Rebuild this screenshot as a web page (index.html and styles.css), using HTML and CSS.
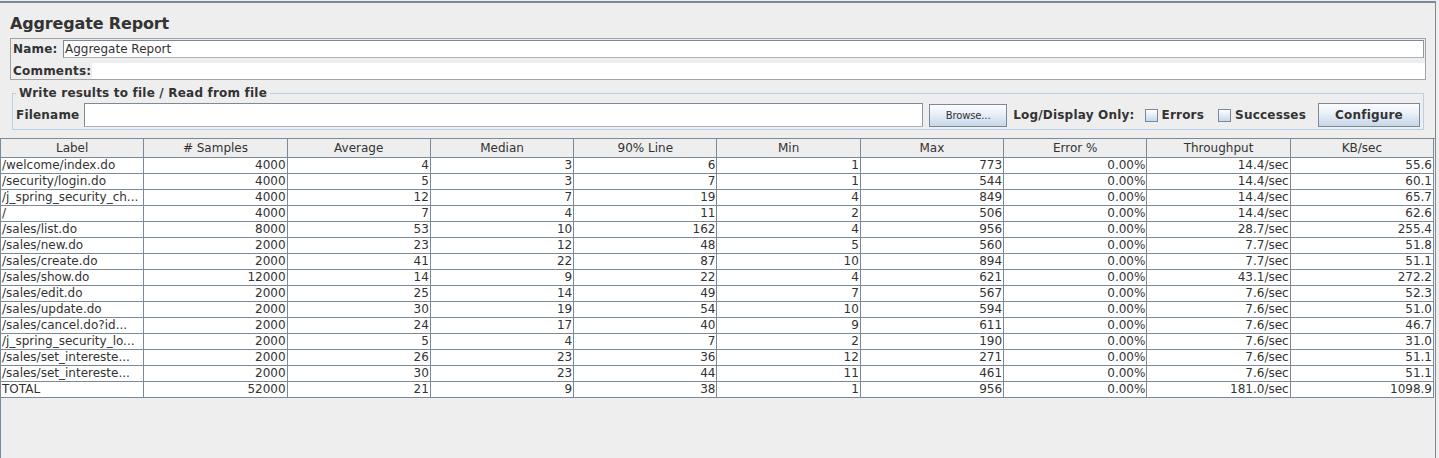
FILE: index.html
```html
<!DOCTYPE html>
<html>
<head>
<meta charset="utf-8">
<title>Aggregate Report</title>
<link rel="stylesheet" href="styles.css">
</head>
<body>
<div class="frame">
  <div class="title">Aggregate Report</div>
  <div class="namebox">
    <div class="nrow">
      <span class="lbl lbl-name">Name:</span>
      <div class="tfield name-field">Aggregate Report</div>
    </div>
    <div class="crow">
      <span class="lbl lbl-comments">Comments:</span>
      <div class="comments"></div>
    </div>
  </div>
  <fieldset class="filebox">
    <legend class="legend">Write results to file / Read from file</legend>
    <div class="frow">
      <span class="lbl lbl-file">Filename</span>
      <div class="tfield file-field"></div>
      <div class="btn btn-browse">Browse...</div>
      <span class="lbl lbl-log">Log/Display Only:</span>
      <span class="check check-err"></span><span class="lbl lbl-err">Errors</span>
      <span class="check check-succ"></span><span class="lbl lbl-succ">Successes</span>
      <div class="btn btn-config">Configure</div>
    </div>
  </fieldset>
  <div class="pane">
    <table class="grid">
      <thead>
        <tr><th>Label</th><th># Samples</th><th>Average</th><th>Median</th><th>90% Line</th><th>Min</th><th>Max</th><th>Error %</th><th>Throughput</th><th>KB/sec</th></tr>
      </thead>
      <tbody>
        <tr><td>/welcome/index.do</td><td>4000</td><td>4</td><td>3</td><td>6</td><td>1</td><td>773</td><td>0.00%</td><td>14.4/sec</td><td>55.6</td></tr>
        <tr><td>/security/login.do</td><td>4000</td><td>5</td><td>3</td><td>7</td><td>1</td><td>544</td><td>0.00%</td><td>14.4/sec</td><td>60.1</td></tr>
        <tr><td>/j_spring_security_ch...</td><td>4000</td><td>12</td><td>7</td><td>19</td><td>4</td><td>849</td><td>0.00%</td><td>14.4/sec</td><td>65.7</td></tr>
        <tr><td>/</td><td>4000</td><td>7</td><td>4</td><td>11</td><td>2</td><td>506</td><td>0.00%</td><td>14.4/sec</td><td>62.6</td></tr>
        <tr><td>/sales/list.do</td><td>8000</td><td>53</td><td>10</td><td>162</td><td>4</td><td>956</td><td>0.00%</td><td>28.7/sec</td><td>255.4</td></tr>
        <tr><td>/sales/new.do</td><td>2000</td><td>23</td><td>12</td><td>48</td><td>5</td><td>560</td><td>0.00%</td><td>7.7/sec</td><td>51.8</td></tr>
        <tr><td>/sales/create.do</td><td>2000</td><td>41</td><td>22</td><td>87</td><td>10</td><td>894</td><td>0.00%</td><td>7.7/sec</td><td>51.1</td></tr>
        <tr><td>/sales/show.do</td><td>12000</td><td>14</td><td>9</td><td>22</td><td>4</td><td>621</td><td>0.00%</td><td>43.1/sec</td><td>272.2</td></tr>
        <tr><td>/sales/edit.do</td><td>2000</td><td>25</td><td>14</td><td>49</td><td>7</td><td>567</td><td>0.00%</td><td>7.6/sec</td><td>52.3</td></tr>
        <tr><td>/sales/update.do</td><td>2000</td><td>30</td><td>19</td><td>54</td><td>10</td><td>594</td><td>0.00%</td><td>7.6/sec</td><td>51.0</td></tr>
        <tr><td>/sales/cancel.do?id...</td><td>2000</td><td>24</td><td>17</td><td>40</td><td>9</td><td>611</td><td>0.00%</td><td>7.6/sec</td><td>46.7</td></tr>
        <tr><td>/j_spring_security_lo...</td><td>2000</td><td>5</td><td>4</td><td>7</td><td>2</td><td>190</td><td>0.00%</td><td>7.6/sec</td><td>31.0</td></tr>
        <tr><td>/sales/set_intereste...</td><td>2000</td><td>26</td><td>23</td><td>36</td><td>12</td><td>271</td><td>0.00%</td><td>7.6/sec</td><td>51.1</td></tr>
        <tr><td>/sales/set_intereste...</td><td>2000</td><td>30</td><td>23</td><td>44</td><td>11</td><td>461</td><td>0.00%</td><td>7.6/sec</td><td>51.1</td></tr>
        <tr><td>TOTAL</td><td>52000</td><td>21</td><td>9</td><td>38</td><td>1</td><td>956</td><td>0.00%</td><td>181.0/sec</td><td>1098.9</td></tr>
      </tbody>
    </table>
  </div>
</div>
</body>
</html>
```

FILE: styles.css
```css
* { box-sizing: border-box; }

html, body {
  margin: 0;
  background: #eeeeee;
}

body {
  padding-top: 1px;
  width: 1439px;
  height: 458px;
  overflow: hidden;
  font-family: "DejaVu Sans", "Liberation Sans", sans-serif;
  font-size: 12px;
  color: #333333;
}

.frame {
  width: 1436px;
  height: 457px;
  border-top: 2px solid #7a8a99;
  border-right: 1px solid #7a8a99;
  display: flex;
  flex-direction: column;
  overflow: hidden;
}

.title {
  padding: 11px 0 4px 10px;
  font-size: 16px;
  font-weight: bold;
  line-height: 20px;
  letter-spacing: -0.15px;
  color: #333333;
}

.lbl {
  font-weight: bold;
  letter-spacing: 0.2px;
  white-space: nowrap;
  color: #333333;
}

/* Name / Comments */
.namebox {
  margin-left: 10px;
  width: 1416px;
  height: 42px;
  border: 1px solid #a3a3a3;
  padding: 1px 0 0 1px;
  display: flex;
  flex-direction: column;
  gap: 5px;
}

.nrow {
  display: flex;
  align-items: center;
  height: 18px;
}

.crow {
  display: flex;
  align-items: center;
  height: 16px;
}

.lbl-name {
  width: 51px;
  padding-left: 1px;
}

.lbl-comments {
  width: 80px;
  padding-left: 1px;
}

.tfield {
  background: #ffffff;
  border: 1px solid #7a8a99;
  border-right-color: #8e9aa6;
  border-bottom-color: #a9b3bd;
}

.name-field {
  flex: 1;
  height: 18px;
  margin-right: 1px;
  padding-left: 1px;
  line-height: 16px;
  color: #333333;
}

.comments {
  flex: 1;
  height: 16px;
  background: #ffffff;
}

/* Write results fieldset */
.filebox {
  margin: 6px 0 0 12px;
  width: 1412px;
  border: 1px solid #b8cfe5;
  padding: 2px 3px 2px 2px;
  min-width: 0;
}

.legend {
  margin-left: 1px;
  padding: 0 3px;
  font-weight: bold;
  letter-spacing: 0.2px;
  line-height: 15px;
  color: #333333;
}

.frow {
  display: flex;
  align-items: center;
  height: 24px;
}

.lbl-file {
  width: 69px;
  padding-left: 1px;
}

.file-field {
  flex: 1;
  height: 24px;
  margin-right: 6px;
}

.btn {
  border: 1px solid #7a8a99;
  background: linear-gradient(to bottom, #fbfcfe 0%, #eef3f9 35%, #c6d6e9 100%);
  display: flex;
  align-items: center;
  justify-content: center;
  color: #333333;
  white-space: nowrap;
}

.btn-browse {
  width: 78px;
  height: 23px;
  font-size: 10px;
  letter-spacing: -0.15px;
  margin-right: 6px;
}

.lbl-log {
  margin-right: 10px;
}

.check {
  width: 13px;
  height: 13px;
  border: 1px solid #7a8a99;
  background: linear-gradient(to bottom, #ffffff 0%, #e8eff7 40%, #c8d8ea 100%);
  flex: none;
}

.check-err {
  margin-right: 4px;
}

.lbl-err {
  margin-right: 14px;
}

.check-succ {
  margin-right: 4px;
}

.lbl-succ {
  margin-right: 12px;
}

.btn-config {
  width: 102px;
  height: 24px;
  font-weight: bold;
  letter-spacing: 0.2px;
}

/* Table */
.pane {
  flex: 1;
  margin-top: 8px;
  border-top: 1px solid #7a8a99;
  border-left: 1px solid #7a8a99;
  width: 1435px;
}

.grid {
  width: 1433px;
  table-layout: fixed;
  border-collapse: separate;
  border-spacing: 0;
  font-size: 12px;
  color: #333333;
}

.grid th,
.grid td {
  border-right: 1px solid #7a8a99;
  border-bottom: 1px solid #7a8a99;
  padding: 0 1px;
  white-space: nowrap;
  overflow: hidden;
}

.grid th {
  height: 19px;
  line-height: 18px;
  font-weight: normal;
  text-align: center;
  background: #eeeeee;
}

.grid td {
  height: 16px;
  line-height: 15px;
  text-align: right;
  background: #ffffff;
}

.grid td:first-child {
  text-align: left;
  padding-left: 1px;
}
```
